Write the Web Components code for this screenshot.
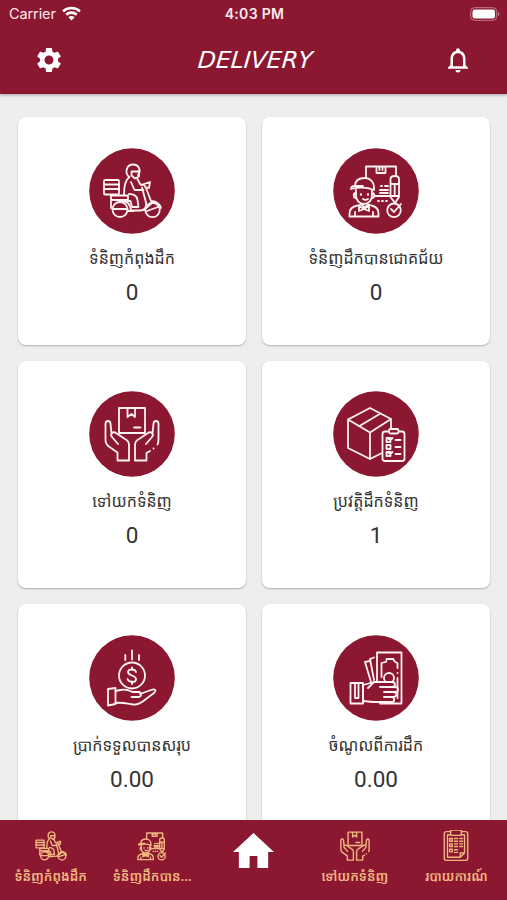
<!DOCTYPE html>
<html lang="km">
<head>
<meta charset="UTF-8">
<meta name="viewport" content="width=device-width, initial-scale=1">
<title>Delivery</title>
<style>
  :root {
    --brand: #8b1730;
    --page: #eeeeee;
    --gold: #f0b780;
    --ink: #333;
    --khmer: "Noto Sans Khmer", "Khmer OS", "Noto Sans", sans-serif;
  }
  html, body { margin: 0; height: 100%; }
  body { overflow: hidden; background: var(--page); }
</style>
</head>
<body>
<delivery-app></delivery-app>

<script>
// line icons, all drawn on the same 86 x 86 disc
const icons = {
  scooter: `
    <rect x="15" y="32" width="15" height="14.5" rx="1"/><path d="M15 36.5h15M15 41h15"/>
    <path d="M40 29c-5-5-2-12.500 4-12.500s8.500 6 5 10.500M42.500 23.500h8M42.500 23.500v4l3.500 3 4-2v-4"/>
    <path d="M40.500 29c-4.500 3-5.500 9-5.500 17.500M48 30l3 6 5 1.500M42 34l3.500 8h9M40 46c6 0 8 2 8.500 6l1 7h-6.500l-1.500-6H32"/>
    <path d="M22 47.5h17v4.500H22zM22 52v8M32 53c7 0 9 3 10 9.500h9c5 0 7-4 6-8l-4-15"/>
    <path d="M52 37l9-3-1 6-4-1M57 40l5 13c5 0 9 3 10 7M55 62l9-8M38.500 63h6"/>
    <circle cx="31" cy="61.5" r="7.5"/><circle cx="63.5" cy="62" r="7.2"/>
    <path d="M23.500 61h15M58 63l11-4"/>`,
  courier: `
    <path d="M33 29V18.5h30V28M43.5 18.5V25h9v-6.500M46.500 19v3M49.500 19v3"/>
    <path d="M18 41c0-2 2-3 4-3 0-6 5-8 10-8s9 4 9 9v3c-7-3-15-3-23-1zM23 42v5c0 5 3 9 8 9s8-4 8-9v-5M23 38h7M28 46v1M35 46v1"/>
    <path d="M23 45c-3 0-3 5 0 5M39 45c3 0 3 5 0 5M30 51c2 1.500 3 1.500 5 0"/>
    <path d="M16.5 68.5v-3c0-4 3-7 8-8l4-1 3 3 4-3 3 1c5 1 7 4 7 8v3zM26 58l5 3 5-3v5l-5-2-5 2zM22 64v4M40 64v4"/>
    <path d="M57.5 31c0-4 8.5-4 8.5 0v18l-4 6-4.5-6zM57.5 36H66M61.700 36v12M57.5 48H66M42 48h15"/>
    <path d="M48 38h1M52 38h3M47 42h8M47 45h8M45 53h1M49 53h1M53 53h1"/>
    <circle cx="61" cy="62.3" r="6.8"/><path d="M58 61l3 3 7-8"/>`,
  hands: `
    <path d="M30 17h26v25H30zM38.5 17v9l4-3 3.5 3v-9M45 36.500h6.500"/>
    <path d="M28.500 69.500H40V54c0-3-2-5-4-6l-9-6c-3-2-6.500 1-4 4l6 7M22.500 42.500l-1-9.500c0-4-5-4-5 0v16c0 3 1 5 4 7l8 5.500v8"/>
    <path d="M57.500 69.500H46V54c0-3 2-5 4-6l9-6c3-2 6.500 1 4 4l-6 7M63.500 42.500l1-9.500c0-4 5-4 5 0v15c0 2 0 4-1 5.500M64.500 57.500h.1M61 60l-3.500 2v7.500"/>`,
  parcel: `
    <path d="M37 17l21 11-21 13.5L15 28.5zM15 28.5V57l22 11V41.5M58 28v10M37 68l12-6M26.500 35l21-12.500"/>
    <rect x="49.5" y="40.5" width="22" height="29.5" rx="2.5"/><rect x="56" y="38" width="9.5" height="4.5" rx="1.5" fill="var(--disc)"/>
    <path d="M53.5 47h4v4h-4zM53.5 54h4v4h-4zM53.5 61h4v4h-4zM62.500 49h5M62.500 56h5M62.500 63h5M55.500 48l2 1 2-2M55.500 62l2 1 2-2"/>`,
  coin: `
    <path d="M36.3 20v5M43 15.5v9M50 20v5"/><circle cx="43" cy="40.5" r="13"/>
    <path d="M47 37c-1-3.500-8-3.500-8 0 0 4 8 3 8 7s-7 4-8.500 0M43 32.500v2.500M43 46.500v2.500M19 54l7.500-1v16l-7.500 1.500z"/>
    <path d="M26.5 56l5-1c5-1 8 0 12 2h6c4 0 3 5 0 5h-7M51 59l11-4c4-1.500 6 0 3 3l-12 9c-3 2-6 3-9 2.500-7-1-11-2.500-17.500-1.500"/>`,
  cash: `
    <path d="M44 47V17.5h24.5v51H47M48.500 42V28l4-1c1 0 1-1 1-3h7c0 2 1 3 4 4v5M64.500 38v.1M64.500 43v20"/>
    <path d="M41 22.500l-4 1.500 4 21M37 26l-5 1 6 20"/><circle cx="56" cy="43" r="5"/>
    <path fill="var(--disc)" d="M30 50l11-3h18c4 0 4 5 0 5h3c4 0 4 5 0 5h-2c5 0 4 5 0 5h-1c3 0 3 5 0 5H40l-10-1zM47 52h12M51 57h9M51 62h8M41 47l-6 6"/>
    <path d="M17.5 48H30v20.5H17.5zM22 48v15h3.500V48"/>`,
  report: `
    <rect x="21" y="16" width="44" height="54" rx="4"/><path d="M27 22h32v34l-8 8H27zM51 64v-8h8"/>
    <rect x="33" y="13" width="20" height="10" rx="2" fill="var(--disc)"/>
    <path d="M31 29h5v5h-5zM31 39h5v5h-5zM31 49h5v5h-5zM40 29h6M50 29h5M40 34h6M50 34h5M40 39h6M50 39h5M40 44h6M50 44h5M40 50h6M40 55h6"/>`
};

class LineIcon extends HTMLElement {
  constructor() {
    super();
    this.attachShadow({ mode: "open" }).innerHTML = `
      <style>
        :host { display: block; --disc: var(--brand); color: #fff3f3; width: 86px; height: 86px; }
        :host([small]) { width: 32px; height: 32px; color: var(--gold); }
        svg { display: block; width: 100%; height: 100%; fill: none; stroke: currentColor;
              stroke-width: 1.8; stroke-linecap: round; stroke-linejoin: round; }
        :host([small]) svg { stroke-width: 2.6; }
      </style>
      <svg></svg>`;
  }

  connectedCallback() {
    const small = this.hasAttribute("small");
    const svg = this.shadowRoot.querySelector("svg");
    svg.setAttribute("viewBox", small ? "13 13 60 60" : "0 0 86 86");
    const disc = small ? "" : `<circle cx="43" cy="43" r="42.8" fill="var(--disc)" stroke="none"/>`;
    svg.innerHTML = disc + icons[this.getAttribute("name")];
  }
}

class StatusBar extends HTMLElement {
  constructor() {
    super();
    this.attachShadow({ mode: "open" }).innerHTML = `
      <style>
        :host { display: grid; grid-template-columns: 1fr auto 1fr; align-items: center; height: 27px;
                padding: 0 7px 0 9px; color: #fbe9ec; font: 14.5px/27px Inter, sans-serif; }
        .carrier { display: flex; align-items: center; gap: 6px; letter-spacing: -.1px; }
        .time { font-weight: 600; font-size: 14px; letter-spacing: .3px; }
        .battery { justify-self: end; }
        svg { display: block; }
      </style>
      <div class="carrier"><span>Carrier</span>
        <svg width="19" height="15" viewBox="0 0 18 14" fill="none" stroke="#fff" stroke-width="2.4">
          <path d="M1 5a11.5 11.5 0 0 1 16 0M4 8.2a7.2 7.2 0 0 1 10 0"/>
          <path d="M6 10.5a4.3 4.3 0 0 1 6 0L9 13.7z" fill="#fff" stroke="none"/>
        </svg>
      </div>
      <span class="time">4:03 PM</span>
      <svg class="battery" width="30" height="14" viewBox="0 0 30 14">
        <rect x=".7" y=".7" width="26" height="12.6" rx="3.8" fill="none" stroke="#c47e8c"/>
        <rect x="2.5" y="2.5" width="22.5" height="9" rx="2.3" fill="#fff"/>
        <path d="M28 5c2 .7 2 3.3 0 4z" fill="#c47e8c"/>
      </svg>`;
  }
}

class AppHeader extends HTMLElement {
  constructor() {
    super();
    this.attachShadow({ mode: "open" }).innerHTML = `
      <style>
        :host { display: block; height: 94px; background: var(--brand); box-shadow: 0 1px 3px #0005; z-index: 1; }
        .bar { display: grid; grid-template-columns: 30px 1fr 30px; align-items: center; height: 65px; padding: 0 34px; }
        .title { text-align: center; color: #fff; font: italic 400 23.5px/28px "DejaVu Sans", sans-serif; }
        .title span { display: inline-block; transform: skewX(-5deg); margin-left: 4px; }
        svg { display: block; width: 30px; height: 30px; fill: #fff; }
      </style>
      <status-bar></status-bar>
      <div class="bar">
        <svg viewBox="0 0 24 24"><path d="M19.14 12.94c.04-.3.06-.61.06-.94s-.02-.64-.07-.94l2.03-1.58a.49.49 0 0 0 .12-.61l-1.92-3.32a.49.49 0 0 0-.59-.22l-2.39.96a7 7 0 0 0-1.62-.94l-.36-2.54a.48.48 0 0 0-.48-.41h-3.84a.47.47 0 0 0-.47.41l-.36 2.54a7.4 7.4 0 0 0-1.62.94l-2.39-.96a.47.47 0 0 0-.59.22L2.74 8.87a.47.47 0 0 0 .12.61l2.03 1.58a6 6 0 0 0 0 1.88l-2.03 1.58a.49.49 0 0 0-.12.61l1.92 3.32c.12.22.37.29.59.22l2.39-.96c.5.38 1.03.7 1.62.94l.36 2.54c.05.24.24.41.48.41h3.84c.24 0 .44-.17.47-.41l.36-2.54a7 7 0 0 0 1.62-.94l2.39.96c.22.08.47 0 .59-.22l1.92-3.32a.47.47 0 0 0-.12-.61zM12 15.6a3.6 3.6 0 1 1 0-7.2 3.6 3.6 0 0 1 0 7.2z"/></svg>
        <div class="title"><span>DELIVERY</span></div>
        <svg viewBox="0 0 24 24"><path d="M12 22c1.1 0 2-.9 2-2h-4a2 2 0 0 0 2 2zm6-6v-5c0-3.070-1.63-5.64-4.5-6.32V4a1.5 1.5 0 0 0-3 0v.68C7.64 5.36 6 7.92 6 11v5l-2 2v1h16v-1zm-2 1H8v-6c0-2.48 1.51-4.5 4-4.5s4 2.02 4 4.5z"/></svg>
      </div>`;
  }
}

class StatCard extends HTMLElement {
  constructor() {
    super();
    this.attachShadow({ mode: "open" }).innerHTML = `
      <style>
        :host { display: flex; flex-direction: column; align-items: center; box-sizing: border-box; height: 227.6px;
                padding-top: 30.5px; background: #fff; border-radius: 8px; box-shadow: 0 1px 2px #0004; color: var(--ink); }
        .label { margin-top: 10px; height: 28px; font: 16px/28px var(--khmer); white-space: nowrap; }
        .value { margin-top: 6px; font: 22.5px/28px Roboto, sans-serif; }
      </style>
      <line-icon name="${this.getAttribute("icon")}"></line-icon>
      <div class="label"><slot></slot></div>
      <div class="value">${this.getAttribute("value")}</div>`;
  }
}

class NavItem extends HTMLElement {
  constructor() {
    super();
    this.attachShadow({ mode: "open" }).innerHTML = `
      <style>
        :host { display: flex; flex-direction: column; align-items: center; padding-top: 10px; color: var(--gold); }
        .label { font: 600 13px/26px var(--khmer); white-space: nowrap; margin-top: 1px; }
      </style>
      <line-icon small name="${this.getAttribute("icon")}"></line-icon>
      <div class="label"><slot></slot></div>`;
  }
}

class BottomNav extends HTMLElement {
  constructor() {
    super();
    this.attachShadow({ mode: "open" }).innerHTML = `
      <style>
        :host { display: grid; grid-template-columns: repeat(5, 1fr); height: 80.5px; background: var(--brand); z-index: 1; }
        .home { justify-self: center; padding-top: 13px; }
        svg { display: block; width: 41px; height: 36px; }
      </style>
      <nav-item icon="scooter">ទំនិញកំពុងដឹក</nav-item>
      <nav-item icon="courier">ទំនិញដឹកបាន...</nav-item>
      <div class="home"><svg viewBox="0 0 42 36" preserveAspectRatio="none"><path fill="#fff" d="M21 0L0 19h6v16h11V23h8v12h11V19h6z"/></svg></div>
      <nav-item icon="hands">ទៅយកទំនិញ</nav-item>
      <nav-item icon="report">របាយការណ៍</nav-item>`;
  }
}

class DeliveryApp extends HTMLElement {
  constructor() {
    super();
    this.attachShadow({ mode: "open" }).innerHTML = `
      <style>
        :host { display: grid; grid-template-rows: 94px minmax(0, 1fr) 80.5px; height: 100vh; }
        main { display: grid; grid-template-columns: 1fr 1fr; grid-auto-rows: max-content; gap: 16px;
               padding: 23px 17px 0 18px; overflow: hidden; }
      </style>
      <app-header></app-header>
      <main>
        <stat-card icon="scooter" value="0">ទំនិញកំពុងដឹក</stat-card>
        <stat-card icon="courier" value="0">ទំនិញដឹកបានជោគជ័យ</stat-card>
        <stat-card icon="hands" value="0">ទៅយកទំនិញ</stat-card>
        <stat-card icon="parcel" value="1">ប្រវត្តិដឹកទំនិញ</stat-card>
        <stat-card icon="coin" value="0.00">ប្រាក់ទទួលបានសរុប</stat-card>
        <stat-card icon="cash" value="0.00">ចំណូលពីការដឹក</stat-card>
      </main>
      <bottom-nav></bottom-nav>`;
  }
}

customElements.define("line-icon", LineIcon);
customElements.define("status-bar", StatusBar);
customElements.define("app-header", AppHeader);
customElements.define("stat-card", StatCard);
customElements.define("nav-item", NavItem);
customElements.define("bottom-nav", BottomNav);
customElements.define("delivery-app", DeliveryApp);
</script>
</body>
</html>
